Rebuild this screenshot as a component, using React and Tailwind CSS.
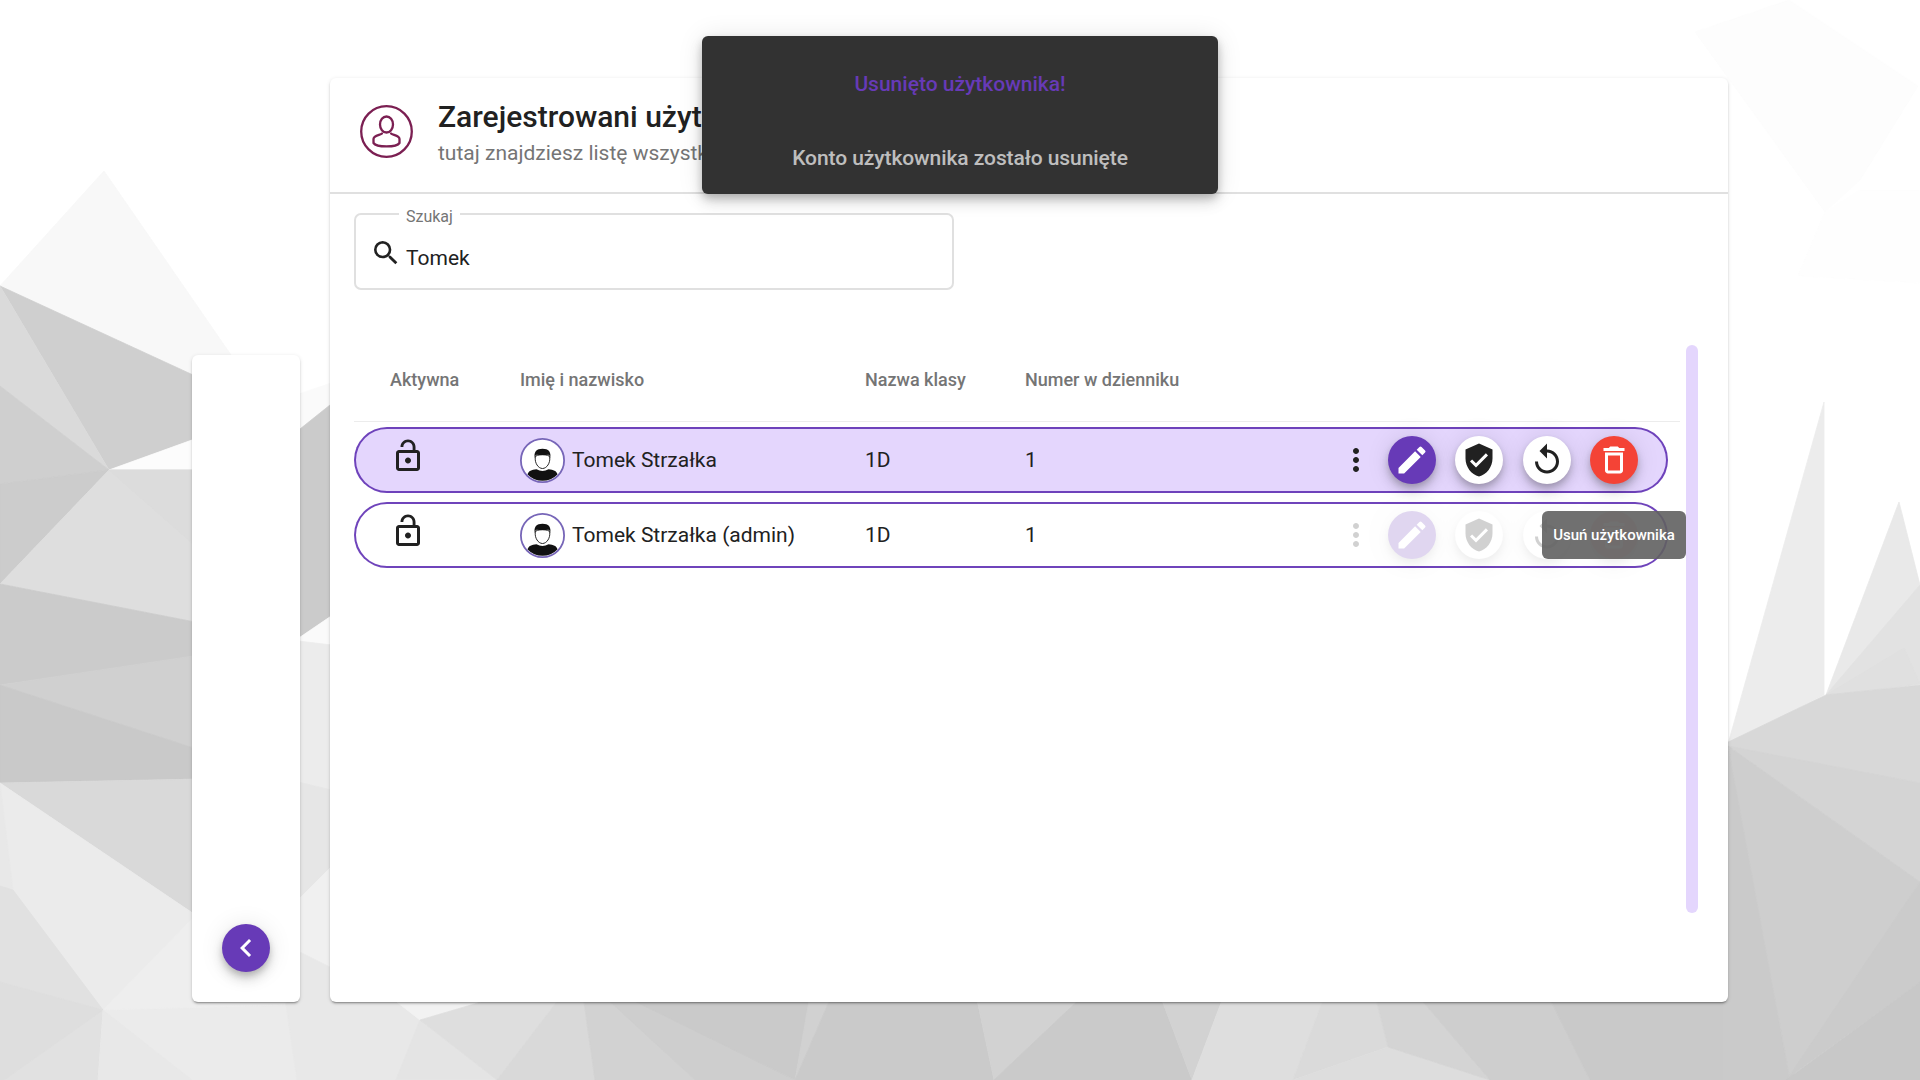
import React from 'react';
import {
  MdMoreVert, MdEdit, MdVerifiedUser, MdReplay, MdDeleteOutline, MdSearch, MdChevronLeft,
} from 'react-icons/md';

const shapes = [
  ['#fdfdfd', '1789,0 1695,32 1825,212 1860,180 1918,86'],
  ['#fefefe', '1825,212 1860,190 1920,190 1920,283 1798,276'],
  ['#f8f8f8', '0,286 104,171 231,355 231,390 192,374'],
  ['#cfcfcf', '0,286 192,374.500 192,440 109,470'],
  ['#dadada', '0,286 0,386 109,470'],
  ['#cfcfcf', '0,386 109,470 0,484'],
  ['#cccccc', '0,484 109,470 0,584'],
  ['#fcfcfc', '109,470 192,440 192,470'],
  ['#dedede', '109,470 200,470 200,623 0,584'],
  ['#dcdcdc', '109,470 200,470 200,550'],
  ['#cbcbcb', '0,584 200,623 200,657 0,685'],
  ['#d0d0d0', '0,685 200,655 200,750'],
  ['#c9c9c9', '0,685 200,750 200,779 0,783'],
  ['#d9d9d9', '0,783 200,779 200,918'],
  ['#ebebeb', '0,783 200,918 340,1002 430,1002 396,1080 0,1080'],
  ['#eeeeee', '103,1010 192,919 260,960 286,1005'],
  ['#e8e8e8', '0,783 13,890 0,887'],
  ['#e1e1e1', '0,886 13,890 103,1010 98,1080 0,1080'],
  ['#dedede', '0,982 103,1010 4,1080 0,1080'],
  ['#e8e8e8', '103,1010 98,1080 192,1080'],
  ['#fafafa', '290,397 340,380 340,400 290,438'],
  ['#cbcbcb', '290,437 340,397 340,610 290,644'],
  ['#fafafa', '290,644 340,610 340,646 290,640'],
  ['#ececec', '290,640 340,646 340,792 290,780'],
  ['#e6e6e6', '290,780 340,792 340,858 290,908'],
  ['#f0f0f0', '290,908 340,858 340,972 290,947'],
  ['#e8e8e8', '290,947 340,972 430,1002 396,1080 297,1080 286,1005'],
  ['#ececec', '1824,402 1824,695 1728,744'],
  ['#e9e9e9', '1899,502 1920,585 1920,602 1826,695'],
  ['#e2e2e2', '1826,695 1920,585 1920,684'],
  ['#e0e0e0', '1826,695 1904,648 1920,684'],
  ['#d8d8d8', '1720,746 1826,695 1920,685 1920,783'],
  ['#d4d4d4', '1728,746 1920,783 1920,882'],
  ['#cecece', '1728,746 1920,882 1790,1080'],
  ['#cacaca', '1720,742 1728,746 1790,1080 1720,1080'],
  ['#cbcbcb', '1920,882 1920,982 1788,1078'],
  ['#c8c8c8', '1920,982 1920,1080 1786,1080'],
  ['#f2f2f2', '388,995 420,1020 505,995'],
  ['#e4e4e4', '420,1020 396,1080 497,1080'],
  ['#dedede', '420,1020 505,995 562,995 497,1080'],
  ['#d9d9d9', '562,995 583,995 595,1080 497,1080'],
  ['#d2d2d2', '583,995 605,995 695,1080 595,1080'],
  ['#cecece', '603,995 625,995 795,1080 695,1080'],
  ['#cacaca', '622,995 811,995 795,1080'],
  ['#d1d1d1', '810,995 832,995 795,1080'],
  ['#cacaca', '832,995 976,995 994,1080 795,1080'],
  ['#d2d2d2', '976,995 1086,995 994,1080'],
  ['#cacaca', '1084,995 1160,995 1192,1080 994,1080'],
  ['#d2d2d2', '1160,995 1224,995 1192,1080'],
  ['#dedede', '1224,995 1325,995 1293,1080 1192,1080'],
  ['#dadada', '1325,995 1375,995 1388,1047 1293,1080'],
  ['#dddddd', '1388,1047 1490,1080 1293,1080'],
  ['#d4d4d4', '1375,995 1417,995 1490,1080 1388,1047'],
  ['#cecece', '1417,995 1548,995 1590,1080 1490,1080'],
  ['#c9c9c9', '1548,995 1722,995 1722,1080 1590,1080'],
];

function Backdrop() {
  return (
    <svg className="absolute inset-0 h-full w-full" viewBox="0 0 1920 1080" aria-hidden="true">
      {shapes.map(([fill, points], i) => (
        <polygon key={i} points={points} fill={fill} stroke={fill} strokeWidth="0.8" />
      ))}
    </svg>
  );
}

function LockOpen() {
  return (
    <svg className="-mt-2 size-9" viewBox="0 0 24 24" fill="currentColor">
      <path d="M12 17c1.1 0 2-.9 2-2s-.9-2-2-2-2 .9-2 2 .9 2 2 2zm6-9h-1V6c0-2.76-2.24-5-5-5S7 3.24 7 6h1.9c0-1.71 1.39-3.1 3.1-3.1 1.71 0 3.1 1.39 3.1 3.1v2H6c-1.1 0-2 .9-2 2v10c0 1.1.9 2 2 2h12c1.1 0 2-.9 2-2V10c0-1.1-.9-2-2-2zm0 12H6V10h12v10z" />
    </svg>
  );
}

function Avatar() {
  return (
    <svg className="size-[45px] shrink-0" viewBox="0 0 45 45">
      <circle cx="22.5" cy="22.5" r="21.5" fill="#fff" />
      <path d="M7.500 36.500c1-3.600 4-4.700 9-5.200q6 3.500 12 0c5 .5 8 1.600 9 5.200A21 21 0 0 1 7.500 36.500z" fill="#111" />
      <path d="M15.300 19c0-3 14.400-3 14.400 0 .8 6-3 11.500-7.200 11.500S14.500 25 15.300 19z" fill="#fff" stroke="#111" strokeWidth="0.9" />
      <path d="M14.800 20c-1.200-6 1.700-9.200 7.700-9.200s8.900 3.200 7.700 9.200q-.4-2.600-1.700-3.200-6 .6-12 0-1.300.6-1.700 3.200z" fill="#111" />
      <circle cx="22.500" cy="22.500" r="21.600" fill="none" stroke="#7766b8" strokeWidth="1.800" />
    </svg>
  );
}

function PersonBadge() {
  return (
    <svg className="size-[54px] shrink-0" viewBox="0 0 54 54" fill="none" stroke="#7b1f52" strokeWidth="2.300" strokeLinecap="round" strokeLinejoin="round">
      <circle cx="27.500" cy="26.500" r="25.300" />
      <ellipse cx="27.500" cy="19.500" rx="6.500" ry="8" />
      <path d="M23 28.500c-1.500 1.500-8.500 2-8.500 5.500v4c3 4.500 23 4.500 26 0v-4c0-3.500-7-4-8.500-5.500" />
    </svg>
  );
}

const fab = 'flex size-12 shrink-0 items-center justify-center rounded-full shadow-[0_4px_7px_-1px_rgba(0,0,0,0.2),0_8px_12px_rgba(0,0,0,0.12),0_1px_24px_rgba(0,0,0,0.1)]';

function Row({ name, active }) {
  return (
    <div className={`flex h-[66px] w-[1314px] items-center rounded-[33px] border-2 border-[#673ab7]/95 text-[21px] ${active ? 'bg-[#e4d6fd]' : 'bg-white'}`}>
      <div className="flex w-[164px] pl-[34px]"><LockOpen /></div>
      <div className="flex w-[345px] items-center gap-[7px]">
        <Avatar />
        <span className="mt-px text-[#212121]">{name}</span>
      </div>
      <div className="mt-px w-[160px]">1D</div>
      <div className="mt-px w-[313px]">1</div>
      <div className={`flex items-center ${active ? '' : 'opacity-20'}`}>
        <MdMoreVert className="mr-[14px] size-9" />
        <div className={`${fab} mr-[19px] bg-[#673ab7] text-white`}><MdEdit className="size-9" /></div>
        <div className={`${fab} mr-5 bg-white`}><MdVerifiedUser className="size-9" /></div>
        <div className={`${fab} mr-[19px] bg-white`}><MdReplay className="size-9" /></div>
        <div className={`${fab} bg-[#f44336] text-white`}><MdDeleteOutline className="size-9" /></div>
      </div>
    </div>
  );
}

const card = 'rounded-md bg-white shadow-[0_3px_1px_-2px_rgba(0,0,0,0.2),0_2px_2px_rgba(0,0,0,0.14),0_1px_4px_rgba(0,0,0,0.12)]';

export default function App() {
  return (
    <div className="relative h-[1080px] w-[1920px] overflow-hidden bg-white font-[Roboto,sans-serif] text-[#212121]">
      <Backdrop />
      <div className="relative flex h-[1002px] items-end gap-[30px] pl-48">
        <aside className={`${card} flex h-[647px] w-[108px] items-end justify-center pb-[30px]`}>
          <button className={`${fab} bg-[#673ab7] text-white`}><MdChevronLeft className="size-9" /></button>
        </aside>
        <main className={`${card} h-[924px] w-[1398px]`}>
          <header className="flex h-[116px] border-b-2 border-[#e0e0e0] pt-[27px] pl-[29px]">
            <PersonBadge />
            <div className="ml-[25px]">
              <h1 className="-mt-[6px] whitespace-nowrap text-[30px] font-medium leading-[36px]">Zarejestrowani użytkownicy</h1>
              <p className="mt-[3px] whitespace-nowrap text-[21px] leading-[30px] text-[#757575]">tutaj znajdziesz listę wszystkich</p>
            </div>
          </header>
          <div className="mt-[19px] ml-6 flex h-[77px] w-[600px] rounded-[7px] border-2 border-[#e0e0e0] pl-[14px]">
            <MdSearch className="mt-[22px] size-8" />
            <div className="-mt-[9px] flex flex-col">
              <span className="-ml-[3px] self-start bg-white px-[7px] text-[16px] leading-[22px] text-[#757575]">Szukaj</span>
              <span className="mt-[17px] ml-[4px] text-[21px] leading-[26px]">Tomek</span>
            </div>
          </div>
          <div className="mt-[55px] ml-6 flex h-[568px]">
            <div className="w-[1332px]">
              <div className="flex h-[77px] w-[1326px] items-center border-b border-[#ececec] pb-2 text-[18px] font-medium text-[#757575]">
                <span className="w-[166px] pl-9">Aktywna</span>
                <span className="w-[345px]">Imię i nazwisko</span>
                <span className="w-[160px]">Nazwa klasy</span>
                <span>Numer w dzienniku</span>
              </div>
              <div className="mt-[5px] flex flex-col gap-[9px]">
                <Row name="Tomek Strzałka" active />
                <Row name="Tomek Strzałka (admin)" />
              </div>
            </div>
            <div className="w-3 rounded-md bg-[#e4d6fd]" />
          </div>
        </main>
      </div>
      <div className="absolute left-[702px] top-9 flex h-[158px] w-[516px] flex-col items-center rounded-md bg-[#323232] text-[21px] font-medium shadow-[0_4px_8px_-1px_rgba(0,0,0,0.2),0_8px_14px_rgba(0,0,0,0.13),0_1px_26px_rgba(0,0,0,0.1)]">
        <span className="mt-[33px] leading-[30px] text-[#673ab7]">Usunięto użytkownika!</span>
        <span className="mt-11 leading-[30px] tracking-[-0.08px] text-white/70">Konto użytkownika zostało usunięte</span>
      </div>
      <div className="absolute left-[1542px] top-[511px] flex h-12 w-[144px] items-center justify-center whitespace-nowrap rounded-md bg-[#616161]/90 text-[15px] font-medium text-white">
        Usuń użytkownika
      </div>
    </div>
  );
}
